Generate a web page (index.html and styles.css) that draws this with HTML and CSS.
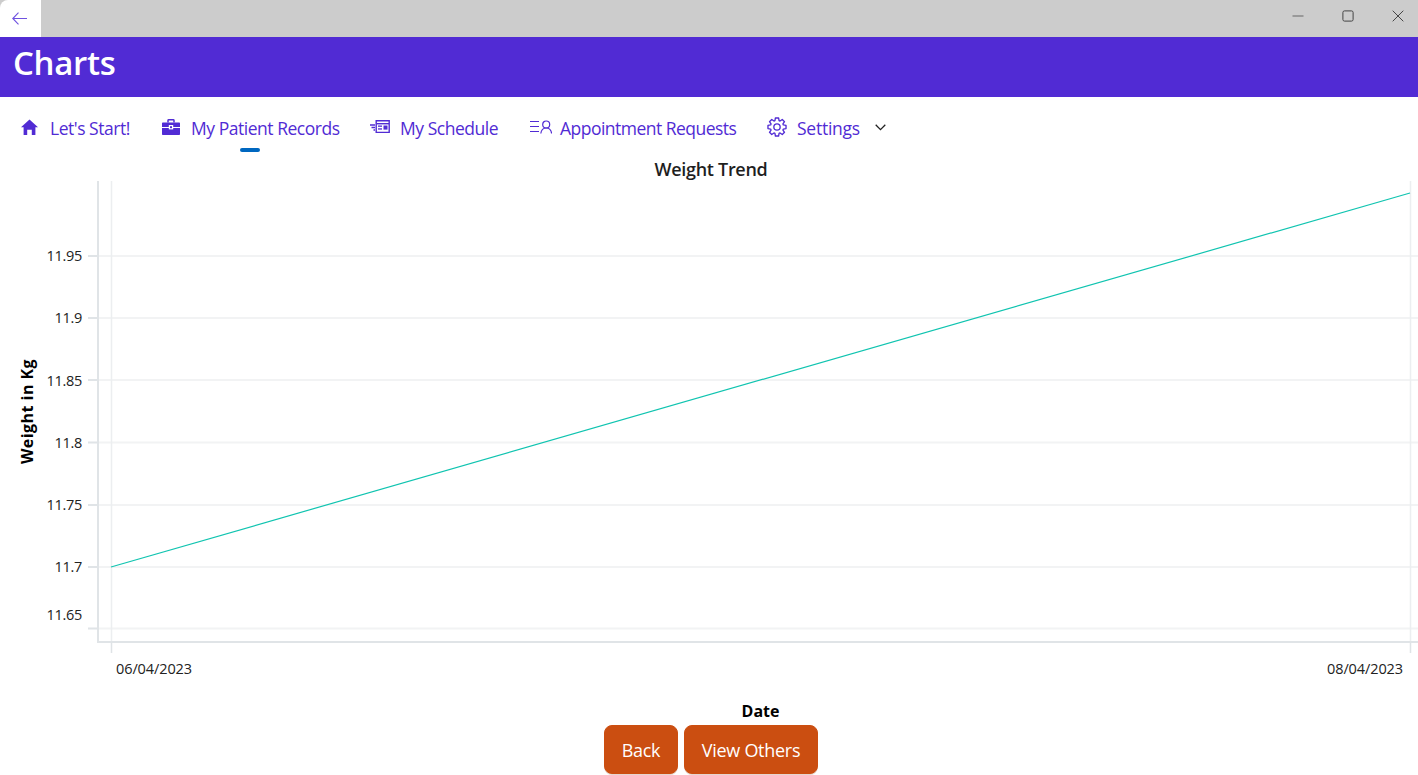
FILE: index.html
```html
<!DOCTYPE html>
<html lang="en">
<head>
<meta charset="utf-8">
<title>Charts</title>
<link rel="stylesheet" href="styles.css">
</head>
<body>
<div class="app">
  <div class="titlebar">
    <button class="back" aria-label="Back">
      <svg width="15" height="13" viewBox="0 0 15 13"><path d="M6.500.6.800 6.500l5.700 5.900M.8 6.500H15" fill="none" stroke="#6f52e0" stroke-width="1.100"/></svg>
    </button>
    <div class="winctl">
      <svg class="wbtn" width="12" height="12" viewBox="0 0 12 12"><path d="M.5 6h11" stroke="#666" stroke-width="1"/></svg>
      <svg class="wbtn" width="12" height="12" viewBox="0 0 12 12"><rect x=".9" y=".9" width="10.200" height="10.200" rx="1.600" fill="none" stroke="#444" stroke-width="1"/></svg>
      <svg class="wbtn" width="12" height="12" viewBox="0 0 12 12"><path d="M.7.7l10.600 10.600M11.300.7.700 11.300" stroke="#444" stroke-width="1"/></svg>
    </div>
  </div>
  <header class="header"><h1 class="page-title">Charts</h1></header>
  <nav class="nav">
    <a class="nav-item item-home">
      <svg class="icon" width="17" height="16" viewBox="0 0 17 16"><path d="M8.500.5 17 8.300h-2.600V16h-3.600v-5.200H6.200V16H2.600V8.300H0z" fill="#512bd4"/></svg>
      <span>Let's Start!</span>
    </a>
    <a class="nav-item item-records">
      <svg class="icon" width="18" height="16" viewBox="0 0 18 16">
        <path fill="none" stroke="#512bd4" stroke-width="1.500" d="M6 3.500V1.500C6 1 6.400.8 6.800.8h4.400c.4 0 .8.300.8.700v2"/>
        <path fill="#512bd4" d="M1 3.500h16c.6 0 1 .4 1 1V8H0V4.500c0-.6.400-1 1-1zM0 9h18v6c0 .6-.4 1-1 1H1c-.6 0-1-.4-1-1z"/>
        <rect x="6.800" y="6" width="4.400" height="4.400" fill="#fff"/>
        <rect x="8" y="7.200" width="2" height="2" fill="#512bd4"/>
      </svg>
      <span>My Patient Records</span>
      <i class="indicator"></i>
    </a>
    <a class="nav-item item-schedule">
      <svg class="icon" width="20" height="14" viewBox="0 0 20 14">
        <g fill="none" stroke="#512bd4" stroke-width="1.400">
          <path d="M6.200.8h13v11.600h-13zM0 5h5M1.500 7.500h3.500M3.500 10H5"/>
          <path d="M6.500 3.700h12.500"/>
        </g>
        <g fill="#512bd4">
          <rect x="8" y="5.500" width="4" height="1.300"/>
          <rect x="8" y="8.300" width="4" height="1.300"/>
          <rect x="13.500" y="5.500" width="4" height="4.100"/>
        </g>
      </svg>
      <span>My Schedule</span>
    </a>
    <a class="nav-item item-requests">
      <svg class="icon" width="22" height="14" viewBox="0 0 22 14"><g fill="none" stroke="#512bd4" stroke-width="1.200"><path d="M0 1.500h9M0 6.500h9M0 11.500h9"/><circle cx="16.200" cy="4.500" r="3.500"/><path d="M10.800 13.500c.4-3.200 2.600-5.500 5.400-5.500s5 2.300 5.400 5.500"/></g></svg>
      <span class="label-requests">Appointment Requests</span>
    </a>
    <a class="nav-item item-settings">
      <svg class="icon" width="20" height="20" viewBox="0 0 24 24"><g fill="none" stroke="#512bd4" stroke-width="1.600" stroke-linejoin="round"><circle cx="12" cy="12" r="3.800"/><path d="M9.530 4.390 10.090 1.170H13.910L14.470 4.390 15.630 4.870 18.310 2.990 21.010 5.690 19.130 8.370 19.610 9.530 22.830 10.090V13.910L19.610 14.470 19.130 15.630 21.010 18.310 18.310 21.010 15.630 19.130 14.470 19.610 13.910 22.830H10.090L9.530 19.610 8.370 19.130 5.690 21.010 2.990 18.310 4.870 15.630 4.390 14.470 1.170 13.910V10.090L4.390 9.530 4.870 8.370 2.990 5.690 5.690 2.990 8.370 4.870z"/></g></svg>
      <span class="label-settings">Settings</span>
      <svg class="chevron" width="11" height="7" viewBox="0 0 11 7"><path d="M.7.800l4.800 4.800L10.300.800" fill="none" stroke="#222" stroke-width="1.300"/></svg>
    </a>
  </nav>
  <main class="chart-wrap">
    <svg class="chart" width="1418" height="570" viewBox="0 155 1418 570">
      <path class="grid-h" d="M98 256H1418M98 318H1418M98 380H1418M98 442.500H1418M98 505H1418M98 567H1418M98 628.500H1418"/>
      <path class="grid-v" d="M111.500 181V642M1410.500 181V642"/>
      <path class="axis" d="M98 181V642H1418"/>
      <path class="ticks-y" d="M88 256H98M88 318H98M88 380H98M88 442.500H98M88 505H98M88 567H98M88 628.500H98"/>
      <path class="ticks-x" d="M111.500 642V653M1410.500 642V653"/>
      <line class="series" x1="111" y1="567" x2="1410" y2="193"/>
      <text class="chart-title" x="711" y="175.500" text-anchor="middle">Weight Trend</text>
      <g class="ytick" text-anchor="end">
        <text x="82" y="261">11.95</text>
        <text x="82" y="323">11.9</text>
        <text x="82" y="386">11.85</text>
        <text x="82" y="448">11.8</text>
        <text x="82" y="510">11.75</text>
        <text x="82" y="572">11.7</text>
        <text x="82" y="620">11.65</text>
      </g>
      <g class="xtick">
        <text x="116" y="674">06/04/2023</text>
        <text x="1327" y="674">08/04/2023</text>
      </g>
      <text class="axis-title" x="760.500" y="717" text-anchor="middle">Date</text>
      <text class="axis-title axis-title-y" transform="translate(33 411.500) rotate(-90)" text-anchor="middle">Weight in Kg</text>
    </svg>
  </main>
  <div class="actions">
    <button class="btn btn-back">Back</button>
    <button class="btn btn-others">View Others</button>
  </div>
</div>
</body>
</html>
```
FILE: styles.css
```css
* { box-sizing: border-box; }
html, body { margin: 0; height: 100%; overflow: hidden; background: #fff; }
body { font-family: "Open Sans", "Noto Sans", "Liberation Sans", sans-serif; }

.app { display: flex; flex-direction: column; height: 775px; width: 1418px; }

.titlebar { height: 37px; background: #cccccc; display: flex; justify-content: space-between; align-items: stretch; flex: none; }
.back { width: 41px; border: 0; padding: 0 2px 0 0; background: #fff; border-top-left-radius: 8px; display: flex; align-items: center; justify-content: center; }
.winctl { display: flex; align-items: center; gap: 38px; padding: 0 14px 6px 0; }

.header { height: 60px; background: #512bd4; flex: none; padding-left: 13px; }
.page-title { margin: 0; color: #fff; font-size: 33px; font-weight: 600; line-height: 52px; letter-spacing: -0.3px; }

.nav { height: 58px; flex: none; display: flex; align-items: flex-start; padding: 19px 0 0 21px; }
.nav-item { position: relative; display: flex; align-items: center; height: 24px; color: #512bd4; font-size: 17.5px; letter-spacing: -0.47px; white-space: nowrap; }
.nav-item .icon { flex: none; margin-top: -2px; }
.item-home { width: 141px; gap: 12px; }
.item-records { width: 208px; gap: 11px; }
.item-schedule { width: 160px; gap: 10px; }
.item-requests { width: 237px; gap: 8px; }
.item-settings { gap: 10px; }
.label-requests { letter-spacing: -0.52px; }
.label-settings { letter-spacing: -0.25px; }
.chevron { margin-left: 5px; margin-top: -2px; }
.indicator { position: absolute; left: 78px; top: 32px; width: 20px; height: 3.500px; border-radius: 2px; background: #0067c0; }

.chart-wrap { height: 570px; flex: none; }
.chart { display: block; }
.grid-h { fill: none; stroke: #f2f3f4; stroke-width: 2; }
.grid-v { fill: none; stroke: #eceef0; stroke-width: 1.500; }
.axis { fill: none; stroke: #e0e4e7; stroke-width: 2; }
.ticks-y { fill: none; stroke: #e0e4e7; stroke-width: 2; }
.ticks-x { fill: none; stroke: #dfe3e6; stroke-width: 1.500; }
.series { stroke: #10c4b0; stroke-width: 1.200; }
.chart-title { font-size: 18px; font-weight: 600; fill: #1f1f1f; letter-spacing: -0.3px; }
.ytick text { font-size: 14.5px; fill: #222; letter-spacing: -0.3px; }
.xtick text { font-size: 14.5px; fill: #222; letter-spacing: -0.1px; }
.axis-title { font-size: 16px; font-weight: 700; fill: #000; }
.axis-title-y { letter-spacing: 0.45px; }

.actions { flex: none; display: flex; justify-content: center; gap: 6px; height: 50px; margin-left: 4px; }
.btn { height: 49px; border: 1px solid #cc4e10; border-radius: 8px; background: #cb4e11; color: #fff; font-family: inherit; font-size: 18px; letter-spacing: -0.27px; padding: 0; box-shadow: 0 1px 0 #e6d6ce; }
.btn-back { width: 74px; }
.btn-others { width: 134px; }
```
